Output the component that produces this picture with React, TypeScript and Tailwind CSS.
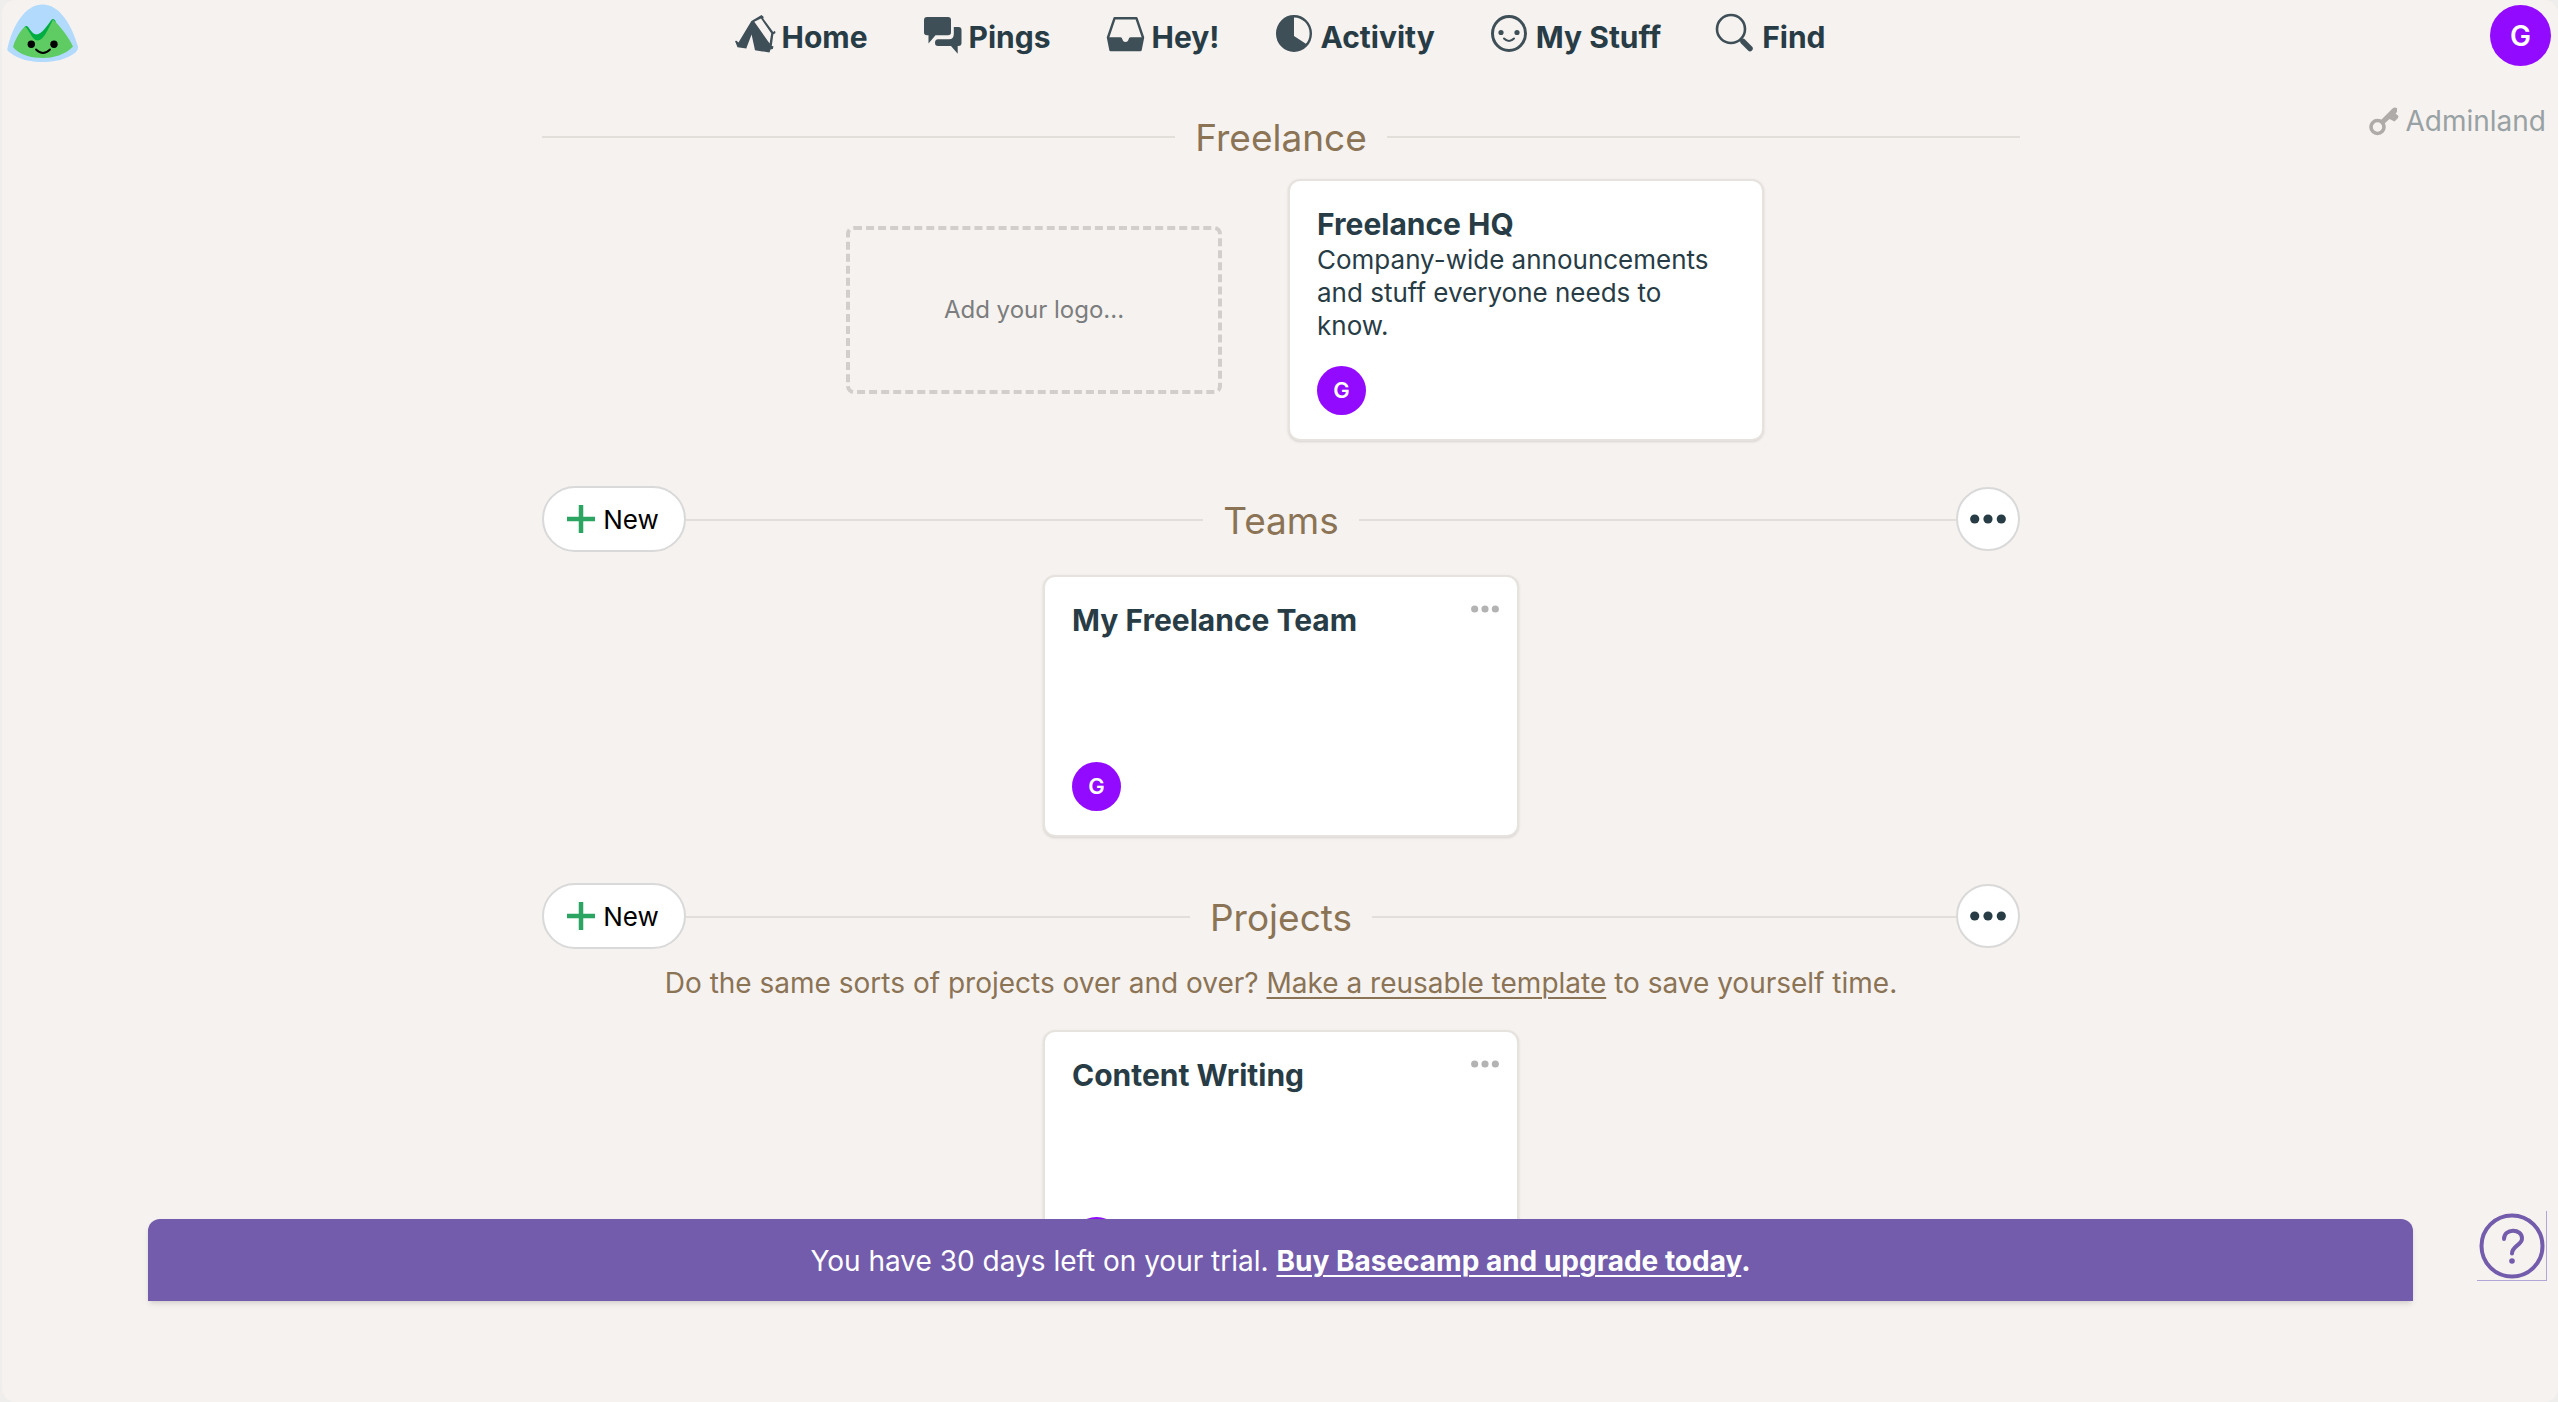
import type { ReactNode } from "react";

const ink = "#3f4f57";

function Logo() {
  return (
    <svg viewBox="0 0 72 59" className="h-[59px] w-[72px]" aria-hidden="true">
      <path
        fill="#b1dafd"
        d="M35.5 .5C53 .5 65 22 70.8 42Q71.8 46 68.5 48.500C59 55.500 48 58 35.500 58 23 58 12 55.500 2.800 48.500-.5 46 .2 46 1 42 6 22 18 .5 35.500 .5Z"
      />
      <path
        fill="#00ad42"
        d="M14 28 17.500 23Q19.500 21 21.500 23.500 25.500 30 29.500 30.500C34.500 30.500 40 22 44 16.500Q46.200 13.500 48.500 17L50 25 33 42 20 34Z"
      />
      <path
        fill="#5ecc62"
        d="M6 43C8 36 12 28 18 22.500 23 27 25 36 30.500 36.500 37 36.500 41 25 46 15.500 53 22 61 32 66 42.500 58 51 46 54 36 54 25 54 12 51 6 43Z"
      />
      <circle cx="24.300" cy="40.300" r="3.700" />
      <circle cx="47" cy="40.300" r="3.700" />
      <path d="M29 45.500Q36 52.500 43 45.500" fill="none" stroke="#000" strokeWidth="1.800" strokeLinecap="round" />
    </svg>
  );
}

function Svg({ children }: { children: ReactNode }) {
  return (
    <svg viewBox="0 0 38 38" className="mb-[6px] h-[38px] w-[38px] overflow-visible" fill={ink} aria-hidden="true">
      {children}
    </svg>
  );
}

function TentIcon() {
  return (
    <Svg>
      <path
        transform="translate(-1 0)"
        fillRule="evenodd"
        d="M16.400 6 26.500 0 28.800 2 28.200 3.500 38.200 17 40 15.800 40.500 18 38.300 19.500 36.800 31 38.500 31.300 37.800 34 35.500 34.500 34.500 37.500 20 35.300 16.600 19.500 12 31.500 11.400 33.500 2.500 32.300 0 26 1.500 25.700 3.500 27.500ZM19.300 6.800 34.600 28.500 36.200 18.200 26 3.500Z"
      />
    </Svg>
  );
}

function PingsIcon() {
  return (
    <Svg>
      <g transform="translate(0 2)">
        <path d="M3 0H24Q27 0 27 3V15.500Q27 18.300 24 18.300H11.500L4.500 26.500V18.300H3Q0 18.300 0 15.500V3Q0 0 3 0Z" />
        <path d="M29.800 10H34.500Q37.500 10 37.500 13V26Q37.500 29 34.500 29H33.700V36.700L27 29H14Q11 29 11 26 11 22.300 14 22.300H25Q29.800 22.300 29.800 17Z" />
      </g>
    </Svg>
  );
}

function TrayIcon() {
  return (
    <Svg>
      <g transform="translate(0 2)">
        <path d="M7.500 1.300H29.500L36 20.500 33.500 33H3.500L1 20.500Z" fill="none" stroke={ink} strokeWidth="2.400" strokeLinejoin="round" />
        <path d="M1 20.200H13.500Q15 20.200 15.300 22 16 25 18.500 25T21.700 22Q22 20.200 23.500 20.200H36L33.500 33H3.500Z" />
      </g>
    </Svg>
  );
}

function ActivityIcon() {
  return (
    <Svg>
      <ellipse cx="18" cy="18.500" rx="16.800" ry="17.300" fill="none" stroke={ink} strokeWidth="2.400" />
      <path d="M18 1V21L31 29.500A17 17.500 0 1 1 18 1Z" />
    </Svg>
  );
}

function SmileIcon() {
  return (
    <Svg>
      <ellipse cx="18" cy="18.500" rx="16.500" ry="17" fill="none" stroke={ink} strokeWidth="3" />
      <circle cx="10" cy="17.500" r="2.600" />
      <circle cx="26" cy="17.500" r="2.600" />
      <path d="M13 23.500Q18 28.500 23 23.500" fill="none" stroke={ink} strokeWidth="2" strokeLinecap="round" />
    </Svg>
  );
}

function FindIcon() {
  return (
    <Svg>
      <circle cx="14" cy="14" r="14" fill="none" stroke={ink} strokeWidth="2.600" />
      <path d="M24 24.500 26.500 27" stroke={ink} strokeWidth="3" />
      <path d="M26 26.500 33 33.500" stroke={ink} strokeWidth="5.500" strokeLinecap="round" />
    </Svg>
  );
}

function KeyIcon() {
  return (
    <svg viewBox="0 0 30 29" className="h-[29px] w-[30px]" aria-hidden="true">
      <circle cx="8.500" cy="20" r="6.500" fill="none" stroke="#aeaba8" strokeWidth="3.600" />
      <path
        fill="#aeaba8"
        d="M11.500 13.500 23 2 25 .5 28 1V5L26.500 6.500 29.500 9 29 11 25.500 14.500 23.500 13.500 20.500 12 15 17Z"
      />
    </svg>
  );
}

function Dots({ className }: { className: string }) {
  return (
    <svg viewBox="0 0 36 10" className={className} fill="currentColor" aria-hidden="true">
      <circle cx="4.700" cy="5" r="4.600" />
      <circle cx="18" cy="5" r="4.600" />
      <circle cx="31.300" cy="5" r="4.600" />
    </svg>
  );
}

const navItems = [
  { label: "Home", icon: <TentIcon /> },
  { label: "Pings", icon: <PingsIcon /> },
  { label: "Hey!", icon: <TrayIcon /> },
  { label: "Activity", icon: <ActivityIcon /> },
  { label: "My Stuff", icon: <SmileIcon /> },
  { label: "Find", icon: <FindIcon /> },
];

function Avatar({ large = false }: { large?: boolean }) {
  return (
    <span
      className={
        large
          ? "flex size-[61px] items-center justify-center rounded-full bg-[#920aff] text-[28px] font-semibold text-white"
          : "flex size-[49px] items-center justify-center rounded-full bg-[#920aff] text-[22px] font-semibold text-white"
      }
    >
      G
    </span>
  );
}

function Rule() {
  return <span className="mt-[2px] h-[2px] flex-1 bg-[#e2dfdb]" />;
}

function SectionHeading({ title, actions = false }: { title: string; actions?: boolean }) {
  return (
    <div className="flex h-[66px] items-center">
      {actions && (
        <button
          type="button"
          className="flex h-full w-36 items-center justify-center gap-2 rounded-full border-2 border-[#d9d9d9] bg-white pr-[2px] text-[26px] text-black"
        >
          <svg viewBox="0 0 28 28" className="size-7" aria-hidden="true">
            <path d="M14 0V28M0 14H28" stroke="#2da562" strokeWidth="4.500" />
          </svg>
          New
        </button>
      )}
      <Rule />
      <h2 className="px-5 pt-[3px] text-[37px] leading-[48px] text-[#8b7355]">{title}</h2>
      <Rule />
      {actions && (
        <div className="flex w-36 items-center">
          <Rule />
          <button
            type="button"
            aria-label={`${title} options`}
            className="flex size-16 items-center justify-center rounded-full border-2 border-[#d9d9d9] bg-white text-[#283c46]"
          >
            <Dots className="h-[10px] w-9" />
          </button>
        </div>
      )}
    </div>
  );
}

function Card({ title, text, menu = false }: { title: string; text?: string; menu?: boolean }) {
  return (
    <article className="relative flex min-h-[262px] w-[476px] flex-col rounded-[12px] border-2 border-[#e6e3df] bg-white px-[27px] pt-[25px] pb-6 text-[#283c46] shadow-sm">
      <h3 className="text-[30px] leading-[37px] font-bold">{title}</h3>
      {text && <p className="text-[26px] leading-[33px]">{text}</p>}
      <div className="mt-auto">
        <Avatar />
      </div>
      {menu && (
        <button type="button" aria-label={`${title} options`} className="absolute top-[22px] right-[18px] flex h-5 items-center text-[#b3b3b3]">
          <Dots className="h-2 w-7" />
        </button>
      )}
    </article>
  );
}

export default function App() {
  return (
    <div className="h-screen overflow-hidden bg-[#efeeed] font-['Inter','Liberation_Sans',sans-serif]">
      <div className="relative ml-[2px] h-full overflow-hidden rounded-[14px] bg-[#f6f2ef] pl-[2px]">
        <header className="relative flex h-[74px] items-center justify-center">
          <a href="#home" aria-label="Basecamp" className="absolute top-1 left-[3px]">
            <Logo />
          </a>
          <nav className="flex items-center gap-14">
            {navItems.map((item) => (
              <a
                key={item.label}
                href="#nav"
                className="flex items-center gap-[7px] text-[30px] leading-9 font-bold text-[#283c46]"
              >
                {item.icon}
                {item.label}
              </a>
            ))}
          </nav>
          <button type="button" aria-label="Account" className="absolute top-[5px] right-[7px] text-white">
            <Avatar large />
          </button>
          <a href="#adminland" className="absolute top-[103px] right-3 flex items-center gap-[6px] text-[28px] leading-9 text-[#98a1a4]">
            <KeyIcon />
            Adminland
          </a>
        </header>

        <main className="mx-auto w-[1478px] max-w-full">
          <section className="pt-[29px]">
            <SectionHeading title="Freelance" />
            <div className="mt-[10px] flex items-center justify-center gap-[66px] pl-12">
              <button
                type="button"
                className="h-[168px] w-[376px] rounded-[8px] border-4 border-dashed border-[#d2cecb] text-[24px] text-[#7b7d7e]"
              >
                Add your logo...
              </button>
              <Card title="Freelance HQ" text="Company-wide announcements and stuff everyone needs to know." />
            </div>
          </section>

          <section className="pt-[45px]">
            <SectionHeading title="Teams" actions />
            <div className="mt-[23px] flex justify-center">
              <Card title="My Freelance Team" menu />
            </div>
          </section>

          <section className="pt-[46px]">
            <SectionHeading title="Projects" actions />
            <p className="mt-4 text-center text-[28px] leading-9 text-[#8b7355]">
              Do the same sorts of projects over and over?{" "}
              <a href="#template" className="underline decoration-2 underline-offset-4">
                Make a reusable template
              </a>{" "}
              to save yourself time.
            </p>
            <div className="mt-[29px] flex justify-center">
              <Card title="Content Writing" menu />
            </div>
          </section>
        </main>

        <aside className="absolute bottom-[101px] left-[146px] right-[145px] rounded-t-[12px] bg-[#735cab] pt-[2px] text-center text-[28px] leading-[80px] text-white shadow-md">
          You have 30 days left on your trial.{" "}
          <span className="font-bold">
            <a href="#buy" className="underline decoration-2 underline-offset-4">
              Buy Basecamp and upgrade today
            </a>
            .
          </span>
        </aside>

        <button
          type="button"
          aria-label="Help"
          className="absolute right-[11px] bottom-[121px] flex size-[70px] items-center justify-center border-r border-b border-[#b3a6d6]"
        >
          <svg viewBox="0 0 66 66" className="size-[66px]" fill="none" stroke="#735cab" aria-hidden="true">
            <circle cx="33" cy="33" r="30.500" strokeWidth="4" />
            <path d="M25 26C25 15 43 15 43 25.500 43 32 33 33 33 40.500" strokeWidth="4" strokeLinecap="round" />
            <circle cx="33" cy="48" r="2.800" fill="#735cab" stroke="none" />
          </svg>
        </button>
      </div>
    </div>
  );
}
